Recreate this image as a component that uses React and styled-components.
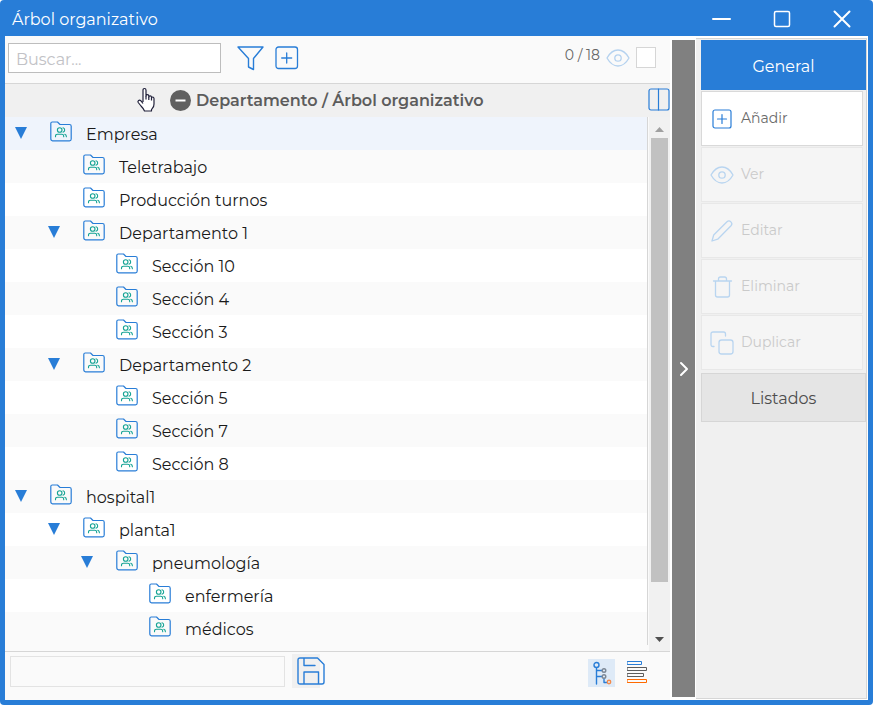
import React from "react";
import styled, { createGlobalStyle } from "styled-components";

const blue = "#287dd7";
const line = "#d6d6d6";

const GlobalStyle = createGlobalStyle`
  *, *::before, *::after { box-sizing: border-box; }
  body {
    margin: 0;
    background: #ffffff;
    font-family: Montserrat, Inter, "Open Sans", sans-serif;
    font-size: 16px;
    color: #1a1a1a;
  }
  button, input { font: inherit; }
  svg { display: block; flex: none; }
`;

const Window = styled.main`
  display: flex;
  flex-direction: column;
  min-height: 100vh;
  padding: 0 5px 5px;
  background: ${blue};
  border-radius: 4px;
`;

const TitleBar = styled.header`
  display: flex;
  align-items: center;
  justify-content: space-between;
  height: 36px;
  padding: 2px 14px 0 7px;
  color: #ffffff;
`;

const Title = styled.h1`
  margin: 0;
  font-size: 16px;
  font-weight: 400;
`;

const WindowButtons = styled.div`
  display: flex;
  gap: 36px;
`;

const IconButton = styled.button`
  display: grid;
  place-items: center;
  flex: none;
  width: ${(p) => p.$width || 24}px;
  height: ${(p) => p.$height || 24}px;
  padding: 0;
  border: 0;
  background: ${(p) => p.$background || "transparent"};
  color: ${(p) => p.$color || blue};
  cursor: pointer;
`;

const SaveButton = styled(IconButton)`
  justify-items: start;
  padding-left: 5px;
`;

const Body = styled.div`
  display: flex;
  flex: 1;
  background: #ffffff;
`;

const MainPane = styled.section`
  display: flex;
  flex: 1;
  flex-direction: column;
  min-width: 0;
  background: #fafafa;
`;

const Toolbar = styled.div`
  display: flex;
  align-items: center;
  height: 48px;
  padding: 0 14px 4px 3px;
  border-bottom: 1px solid ${line};
`;

const SearchInput = styled.input`
  width: 213px;
  height: 30px;
  padding: 4px 7px 0;
  border: 1px solid #bdbdbd;
  background: #ffffff;
  outline: 0;
  &::placeholder { color: #c2c2c6; opacity: 1; }
`;

const ToolbarActions = styled.div`
  display: flex;
  gap: 11px;
  margin-left: 16px;
`;

const Selection = styled.div`
  display: flex;
  align-items: center;
  gap: 6px;
  margin-left: auto;
  color: #666666;
  font-size: 14px;
`;

const Counter = styled.span`
  padding-bottom: 6px;
`;

const SelectAll = styled.input`
  appearance: none;
  width: 20px;
  height: 21px;
  margin: 0;
  border: 1px solid ${line};
  background: #ffffff;
`;

const GroupHeader = styled.div`
  position: relative;
  display: flex;
  align-items: center;
  height: 33px;
  padding: 0 0 0 165px;
  background: #f0f0f0;
  color: #5c5c5c;
`;

const GroupTitle = styled.h2`
  flex: 1;
  margin: 0 0 0 5px;
  font-size: 16px;
  font-weight: 600;
  white-space: nowrap;
`;

const ColumnsButton = styled(IconButton)`
  margin-bottom: 3px;
`;

const Pointer = styled.svg`
  position: absolute;
  left: 131px;
  top: 3px;
  z-index: 1;
`;

const TreeArea = styled.div`
  display: flex;
  flex: 1;
`;

const TreeList = styled.ul`
  flex: 1;
  margin: 0;
  padding: 0 0 6px;
  list-style: none;
`;

const Row = styled.li`
  display: flex;
  align-items: center;
  height: 33px;
  padding-left: ${(p) => 10 + p.$depth * 33}px;
  border-right: 1px solid ${line};
  background: ${(p) => (p.$selected ? "#eff4fc" : "#ffffff")};
  &:nth-child(even) { background: #fafafa; }
`;

const Toggle = styled.button`
  display: grid;
  place-items: center;
  width: 12px;
  height: 12px;
  margin: 0 23px 2px 0;
  padding: 0;
  border: 0;
  background: transparent;
  color: ${blue};
`;

const ToggleSpace = styled.span`
  width: 35px;
`;

const FolderMark = styled.span`
  padding-bottom: 4px;
  color: ${blue};
`;

const Label = styled.span`
  margin-left: 14px;
  padding-top: 1px;
  font-size: 16px;
`;

const Scrollbar = styled.div`
  display: flex;
  flex-direction: column;
  width: 22px;
  padding: 4px 2px 3px;
  background: #f1f1f1;
  border-left: 1px solid #fafafa;
`;

const ScrollButton = styled(IconButton)`
  width: 17px;
  height: 17px;
`;

const Track = styled.div`
  flex: 1;
`;

const Thumb = styled.div`
  width: 17px;
  height: 90%;
  background: #c1c1c1;
`;

const Footer = styled.footer`
  display: flex;
  align-items: flex-start;
  height: 49px;
  padding: 2px 20px 0 5px;
  border-top: 1px solid ${line};
`;

const NameInput = styled.input`
  width: 275px;
  height: 31px;
  margin: 2px 7px 0 0;
  border: 1px solid #e3e3e3;
  background: transparent;
  outline: 0;
`;

const ViewButtons = styled.div`
  display: flex;
  gap: 10px;
  margin: 5px 1px 0 auto;
`;

const Splitter = styled.button`
  display: grid;
  place-items: center;
  width: 23px;
  margin: 4px 1px 3px 2px;
  padding: 0 0 0 1px;
  border: 0;
  background: #808080;
  color: #ffffff;
`;

const Sidebar = styled.aside`
  width: 171px;
  margin: 2px 1px 1px 0;
  padding: 1px 0 0 5px;
  border: solid ${line};
  border-width: 1px 1px 1px 0;
  background: #f0f0f0;
`;

const SectionButton = styled.button`
  display: block;
  width: 100%;
  height: ${(p) => (p.$active ? 50 : 49)}px;
  margin-top: ${(p) => (p.$active ? 0 : 3)}px;
  padding: 2px 0 0;
  border: 1px solid ${(p) => (p.$active ? blue : line)};
  background: ${(p) => (p.$active ? blue : "#e5e5e5")};
  color: ${(p) => (p.$active ? "#ffffff" : "#4d4d4d")};
`;

const ActionList = styled.div`
  display: grid;
  gap: 1px;
  padding: 1px 3px 0 0;
`;

const ActionButton = styled.button`
  display: flex;
  align-items: center;
  gap: 7px;
  height: 55px;
  padding: 0 8px;
  border: 1px solid #d9d9d9;
  background: #ffffff;
  color: #6b6b6b;
  font-size: 14px;
  &:disabled {
    border-color: #e8e8e8;
    background: #f5f5f5;
    color: #cacaca;
  }
`;

const ActionIcon = styled.span`
  display: grid;
  place-items: center;
  width: 24px;
  color: ${(p) => (p.$enabled ? blue : "#b9d5f0")};
`;

const ActionLabel = styled.span`
  padding-bottom: 2px;
`;

const Svg = ({ w = 24, h = w, box, stroke = 1.4, children }) => (
  <svg
    width={w}
    height={h}
    viewBox={box || `0 0 ${w} ${h}`}
    fill="none"
    stroke="currentColor"
    strokeWidth={stroke}
    strokeLinecap="round"
    strokeLinejoin="round"
    aria-hidden="true"
  >
    {children}
  </svg>
);

const PlusIcon = () => (
  <Svg w={24} stroke={1.3}>
    <rect x="1" y="1" width="21.500" height="21.500" rx="2.500" />
    <path d="M11.700 7v10M6.700 12h10" />
  </Svg>
);

const SmallPlusIcon = () => (
  <Svg w={20} stroke={1.2}>
    <rect x="1" y="1" width="18" height="18" rx="2" />
    <path d="M10 5.500v9M5.500 10h9" />
  </Svg>
);

const EyeIcon = () => (
  <Svg w={24} h={20} stroke={1.3}>
    <path d="M1 10Q5.500 2 12 2T23 10Q18.500 18 12 18T1 10Z" />
    <circle cx="12" cy="10" r="3.200" />
  </Svg>
);

const FunnelIcon = () => (
  <Svg w={27} h={25}>
    <path d="M1 1h25l-9.500 11.500v11l-5-2.500v-8.500Z" />
  </Svg>
);

const FolderIcon = () => (
  <Svg w={22} h={21} stroke={1.2}>
    <path d="M.8 17.500V2.500Q.8 1 2.300 1H7.500L10 3.500H19.500Q21.200 3.500 21.200 5.200V18Q21.200 19.800 19.500 19.800H2.500Q.8 19.800.8 17.500Z" />
    <g stroke="#14a394" strokeWidth="1.100">
      <circle cx="9.700" cy="9" r="2.300" />
      <path d="M5.500 15.800v-.6q0-1.900 2-1.900h4.300q1.900 0 1.900 1.900v.6M13 6.800q1.700.5 1.700 2.200t-1.700 2.200M14.800 13.200q1.600.5 1.600 2.600" />
    </g>
  </Svg>
);

const PencilIcon = () => (
  <Svg w={24} stroke={1.3}>
    <path d="M2 22 3.700 16 17 2.700q2-1.700 3.900.2t.1 3.900L7.700 20.200Z" />
  </Svg>
);

const TrashIcon = () => (
  <Svg w={24} stroke={1.3}>
    <path d="M3.500 6h18M8.500 6V4q0-2 2-2h4q2 0 2 2v2M5.500 6V20q0 2 2 2H17.500q2 0 2-2V6" />
  </Svg>
);

const CopyIcon = () => (
  <Svg w={24} stroke={1.3}>
    <rect x="9" y="9" width="14" height="14" rx="2.500" />
    <path d="M4 15.500H3q-2 0-2-2V3q0-2 2-2H13.500q2 0 2 2v2" />
  </Svg>
);

const TriangleIcon = ({ up, w = 12, h = 12, color = blue }) => (
  <svg width={w} height={h} viewBox="0 0 12 12" preserveAspectRatio="none" aria-hidden="true">
    <path d={up ? "M6 0 12 12H0Z" : "M0 0H12L6 12Z"} fill={color} />
  </svg>
);

const SaveIcon = () => (
  <Svg w={28} h={28}>
    <path d="M3 1h17.500L27 7.500V25q0 2-2 2H3q-2 0-2-2V3q0-2 2-2ZM7 1v7.500h11M7 27V15h14.500v12" />
  </Svg>
);

const HierarchyIcon = () => (
  <Svg w={20} h={24}>
    <path d="M4.500 7v16M4.500 9.500H10M4.500 15.500H10M12 18v3.500h3" />
    <circle cx="4.500" cy="4" r="2.500" />
    <g stroke="#7c8794">
      <circle cx="12" cy="9.500" r="1.800" />
      <circle cx="12" cy="15.500" r="1.800" />
    </g>
    <circle cx="17" cy="21" r="1.700" stroke="#f38a4b" />
  </Svg>
);

const ListIcon = () => (
  <Svg w={20} h={24} stroke={1}>
    <path d="M.5 1.500h14v3H.5Z" />
    <path d="M.5 7.500h19v3H.5ZM.5 13.500h16v3H.5Z" stroke="#5c5c5c" />
    <path d="M.5 19.500h19v3H.5Z" stroke="#ff6a00" />
  </Svg>
);

const rows = [
  ["Empresa", 0, true],
  ["Teletrabajo", 1],
  ["Producción turnos", 1],
  ["Departamento 1", 1, true],
  ["Sección 10", 2],
  ["Sección 4", 2],
  ["Sección 3", 2],
  ["Departamento 2", 1, true],
  ["Sección 5", 2],
  ["Sección 7", 2],
  ["Sección 8", 2],
  ["hospital1", 0, true],
  ["planta1", 1, true],
  ["pneumología", 2, true],
  ["enfermería", 3],
  ["médicos", 3],
];

const actions = [
  ["Añadir", SmallPlusIcon, true],
  ["Ver", EyeIcon, false],
  ["Editar", PencilIcon, false],
  ["Eliminar", TrashIcon, false],
  ["Duplicar", CopyIcon, false],
];

export default function App() {
  return (
    <>
      <GlobalStyle />
      <Window>
        <TitleBar>
          <Title>Árbol organizativo</Title>
          <WindowButtons>
            <IconButton $color="#ffffff" aria-label="Minimizar">
              <Svg w={20} stroke={2}><path d="M1 10h17" /></Svg>
            </IconButton>
            <IconButton $color="#ffffff" aria-label="Maximizar">
              <Svg w={18} stroke={1.5}><rect x="1.500" y="1.500" width="15" height="15" rx="1.500" /></Svg>
            </IconButton>
            <IconButton $color="#ffffff" aria-label="Cerrar">
              <Svg w={18} stroke={2}><path d="m1.500 1.500 15 15m0-15-15 15" /></Svg>
            </IconButton>
          </WindowButtons>
        </TitleBar>
        <Body>
          <MainPane>
            <Toolbar>
              <SearchInput type="text" placeholder="Buscar..." aria-label="Buscar" />
              <ToolbarActions>
                <IconButton $width={27} aria-label="Filtrar"><FunnelIcon /></IconButton>
                <IconButton aria-label="Añadir"><PlusIcon /></IconButton>
              </ToolbarActions>
              <Selection>
                <Counter>0 / 18</Counter>
                <IconButton $color="#b5d2ef" aria-label="Ver selección"><EyeIcon /></IconButton>
                <SelectAll type="checkbox" aria-label="Seleccionar todo" />
              </Selection>
            </Toolbar>
            <GroupHeader>
              <Pointer width="20" height="26" viewBox="0 0 20 26" aria-hidden="true">
                <path
                  d="M7 15V3.200q0-1.700 1.500-1.700T10 3.200V9q0-1.300 1.400-1.300T12.800 9v1q.2-1.200 1.400-1.200t1.300 1.200v1q.3-1 1.300-1t1.200 1.500V17q0 2.500-1.500 4.200T15.500 24H8.500Q7.500 21.500 5 19L2.200 15.500q-.7-1.200.4-2t2.200.2L7 16.500"
                  fill="#ffffff" stroke="#20203a" strokeWidth="1.200" strokeLinejoin="round"
                />
                <path d="M10 9v3.500M12.800 10v3M15.500 11v2.500" stroke="#20203a" strokeWidth="1.200" />
              </Pointer>
              <IconButton $width={21} aria-label="Quitar agrupación">
                <svg width="21" height="21" viewBox="0 0 21 21" aria-hidden="true">
                  <circle cx="10.500" cy="10.500" r="10.500" fill="#606060" />
                  <path d="M5.500 10.500h10" stroke="#ffffff" strokeWidth="2" />
                </svg>
              </IconButton>
              <GroupTitle>Departamento / Árbol organizativo</GroupTitle>
              <ColumnsButton $width={22} aria-label="Columnas">
                <Svg w={22} h={23} stroke={1.2}>
                  <rect x="1" y="1" width="20" height="21" rx="2" />
                  <path d="M10.500 1v21" />
                </Svg>
              </ColumnsButton>
            </GroupHeader>
            <TreeArea>
              <TreeList>
                {rows.map(([name, depth, open], i) => (
                  <Row key={name} $depth={depth} $selected={i === 0}>
                    {open ? (
                      <Toggle aria-label={`Contraer ${name}`}><TriangleIcon /></Toggle>
                    ) : (
                      <ToggleSpace />
                    )}
                    <FolderMark><FolderIcon /></FolderMark>
                    <Label>{name}</Label>
                  </Row>
                ))}
              </TreeList>
              <Scrollbar>
                <ScrollButton aria-label="Subir"><TriangleIcon up w={9} h={5} color="#a0a0a0" /></ScrollButton>
                <Track><Thumb /></Track>
                <ScrollButton aria-label="Bajar"><TriangleIcon w={9} h={5} color="#505050" /></ScrollButton>
              </Scrollbar>
            </TreeArea>
            <Footer>
              <NameInput type="text" aria-label="Nombre" />
              <SaveButton $width={28} $height={34} $background="#f0f0f0" aria-label="Guardar"><SaveIcon /></SaveButton>
              <ViewButtons>
                <IconButton $width={27} $height={28} $background="#deeaf7" aria-label="Vista de árbol"><HierarchyIcon /></IconButton>
                <IconButton $height={26} aria-label="Vista de lista"><ListIcon /></IconButton>
              </ViewButtons>
            </Footer>
          </MainPane>
          <Splitter aria-label="Ocultar panel">
            <Svg w={10} h={16} stroke={2}><path d="m2 2 6 6-6 6" /></Svg>
          </Splitter>
          <Sidebar>
            <SectionButton $active>General</SectionButton>
            <ActionList>
              {actions.map(([name, Icon, enabled]) => (
                <ActionButton key={name} disabled={!enabled}>
                  <ActionIcon $enabled={enabled}><Icon /></ActionIcon>
                  <ActionLabel>{name}</ActionLabel>
                </ActionButton>
              ))}
            </ActionList>
            <SectionButton>Listados</SectionButton>
          </Sidebar>
        </Body>
      </Window>
    </>
  );
}
